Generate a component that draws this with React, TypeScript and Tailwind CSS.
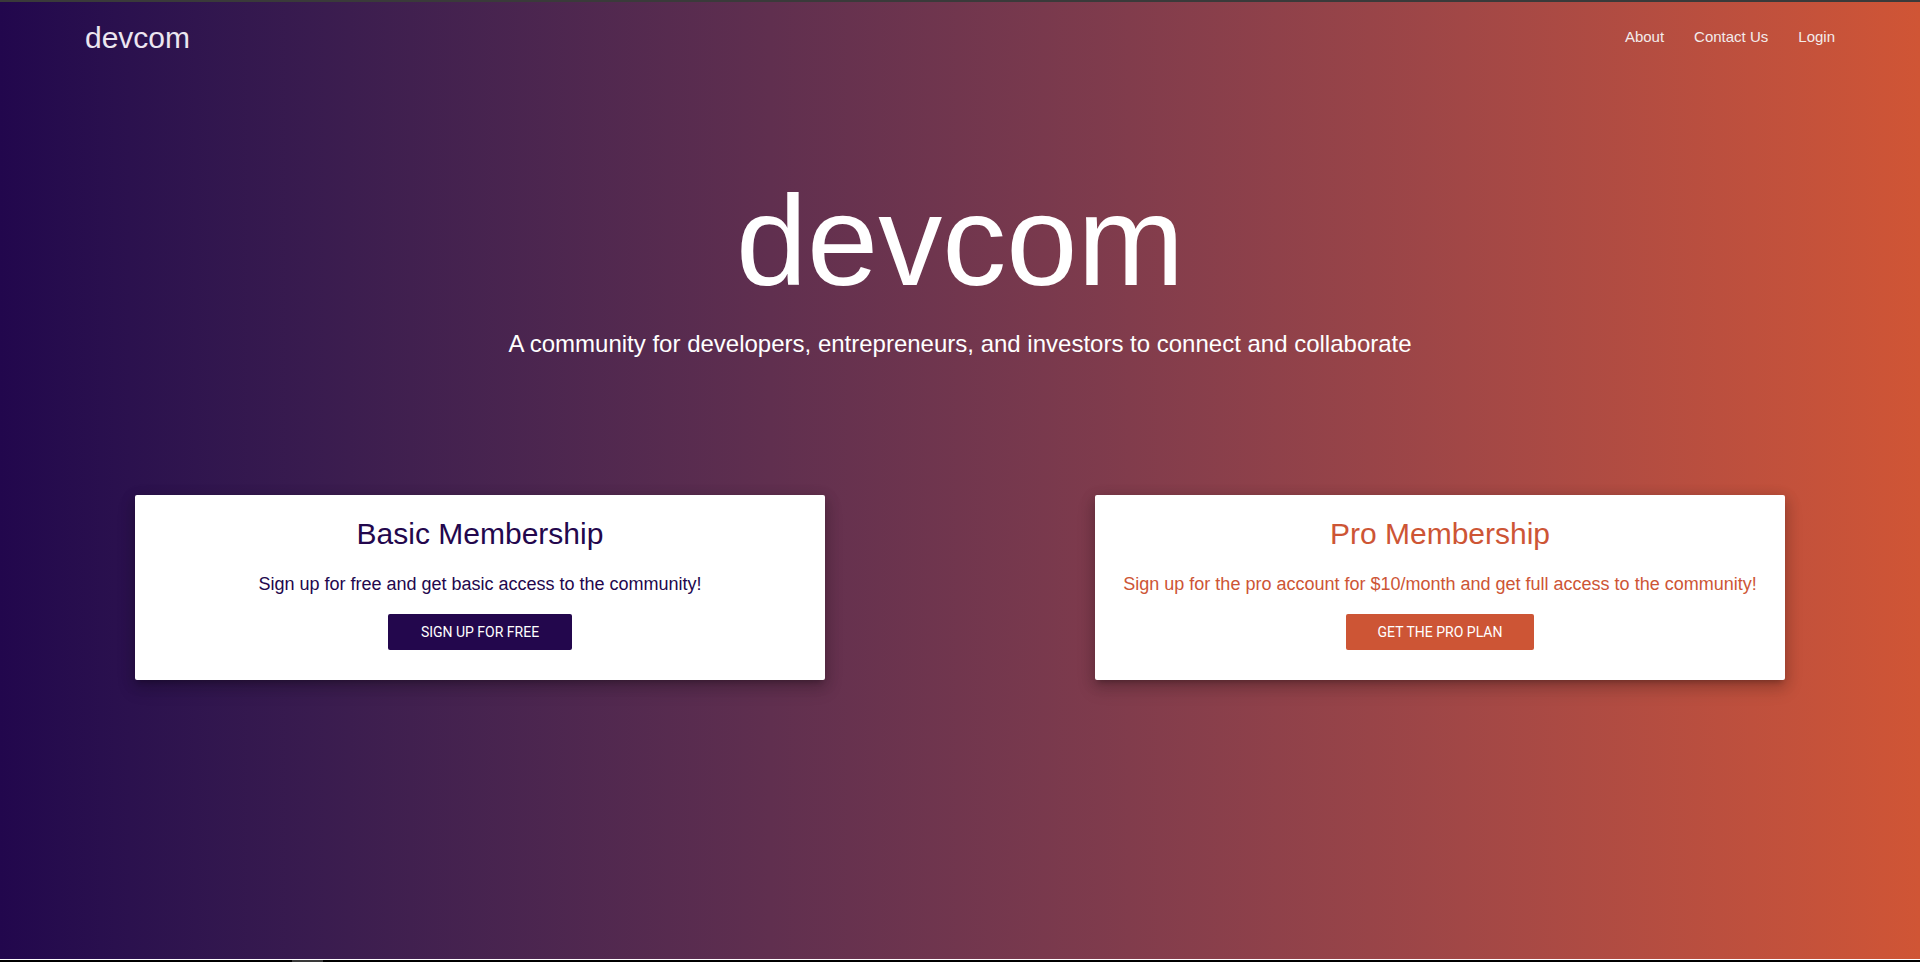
const purple = "#23074d";

function PlanCard({
  title,
  text,
  cta,
  tone,
}: {
  title: string;
  text: string;
  cta: string;
  tone: "basic" | "pro";
}) {
  const isPro = tone === "pro";
  return (
    <div className="w-[690px] rounded-[2px] bg-white px-6 pb-[30px] pt-[24px] text-center shadow-[0_8px_17px_2px_rgba(0,0,0,0.14),0_3px_14px_2px_rgba(0,0,0,0.12),0_5px_5px_-3px_rgba(0,0,0,0.2)]">
      <h2
        className={
          isPro
            ? "text-[30px] leading-none text-[#cd5535]"
            : "text-[30px] leading-none text-[#23074d]"
        }
      >
        {title}
      </h2>
      <p
        className={
          isPro
            ? "mt-[26px] text-[18px] leading-none text-[#cd5535]"
            : "mt-[26px] text-[18px] leading-none text-[#23074d]"
        }
      >
        {text}
      </p>
      <button
        className={
          isPro
            ? "mt-[21px] h-9 rounded-[2px] bg-[#cd5535] px-[32px] font-['Roboto',sans-serif] text-[14px] uppercase text-white"
            : "mt-[21px] h-9 rounded-[2px] bg-[#23074d] px-[33px] font-['Roboto',sans-serif] text-[14px] uppercase text-white"
        }
      >
        {cta}
      </button>
    </div>
  );
}

export default function App() {
  return (
    <div className="flex h-[962px] flex-col overflow-hidden font-['Liberation_Sans',Arial,sans-serif]">
      <div className="h-[2px] shrink-0 bg-[#3a3a3a]" />
      <main className="flex flex-1 flex-col bg-gradient-to-r from-[#22074d] to-[#d05535]">
        <nav className="flex items-start justify-between pl-[85px] pr-[70px]">
          <a className="pt-[21px] text-[30px] leading-none text-[#ece6f0]">devcom</a>
          <ul className="flex pt-[27px] text-[15px] leading-none text-[#f3ecec]">
            <li className="px-[15px]">About</li>
            <li className="px-[15px]">Contact Us</li>
            <li className="px-[15px]">Login</li>
          </ul>
        </nav>
        <section className="mt-[124px] flex flex-col items-center text-white">
          <h1 className="text-[128px] leading-none">devcom</h1>
          <p className="mt-[27px] text-[24px] leading-none">
            A community for developers, entrepreneurs, and investors to connect and collaborate
          </p>
        </section>
        <section className="mt-[139px] flex justify-between px-[135px]">
          <PlanCard
            tone="basic"
            title="Basic Membership"
            text="Sign up for free and get basic access to the community!"
            cta="Sign up for free"
          />
          <PlanCard
            tone="pro"
            title="Pro Membership"
            text="Sign up for the pro account for $10/month and get full access to the community!"
            cta="Get the pro plan"
          />
        </section>
      </main>
      <div className="h-px shrink-0 bg-white" />
      <div className="flex h-[2px] shrink-0 bg-black">
        <div className="ml-[292px] w-[31px] bg-[#3a3a3a]" />
      </div>
    </div>
  );
}
